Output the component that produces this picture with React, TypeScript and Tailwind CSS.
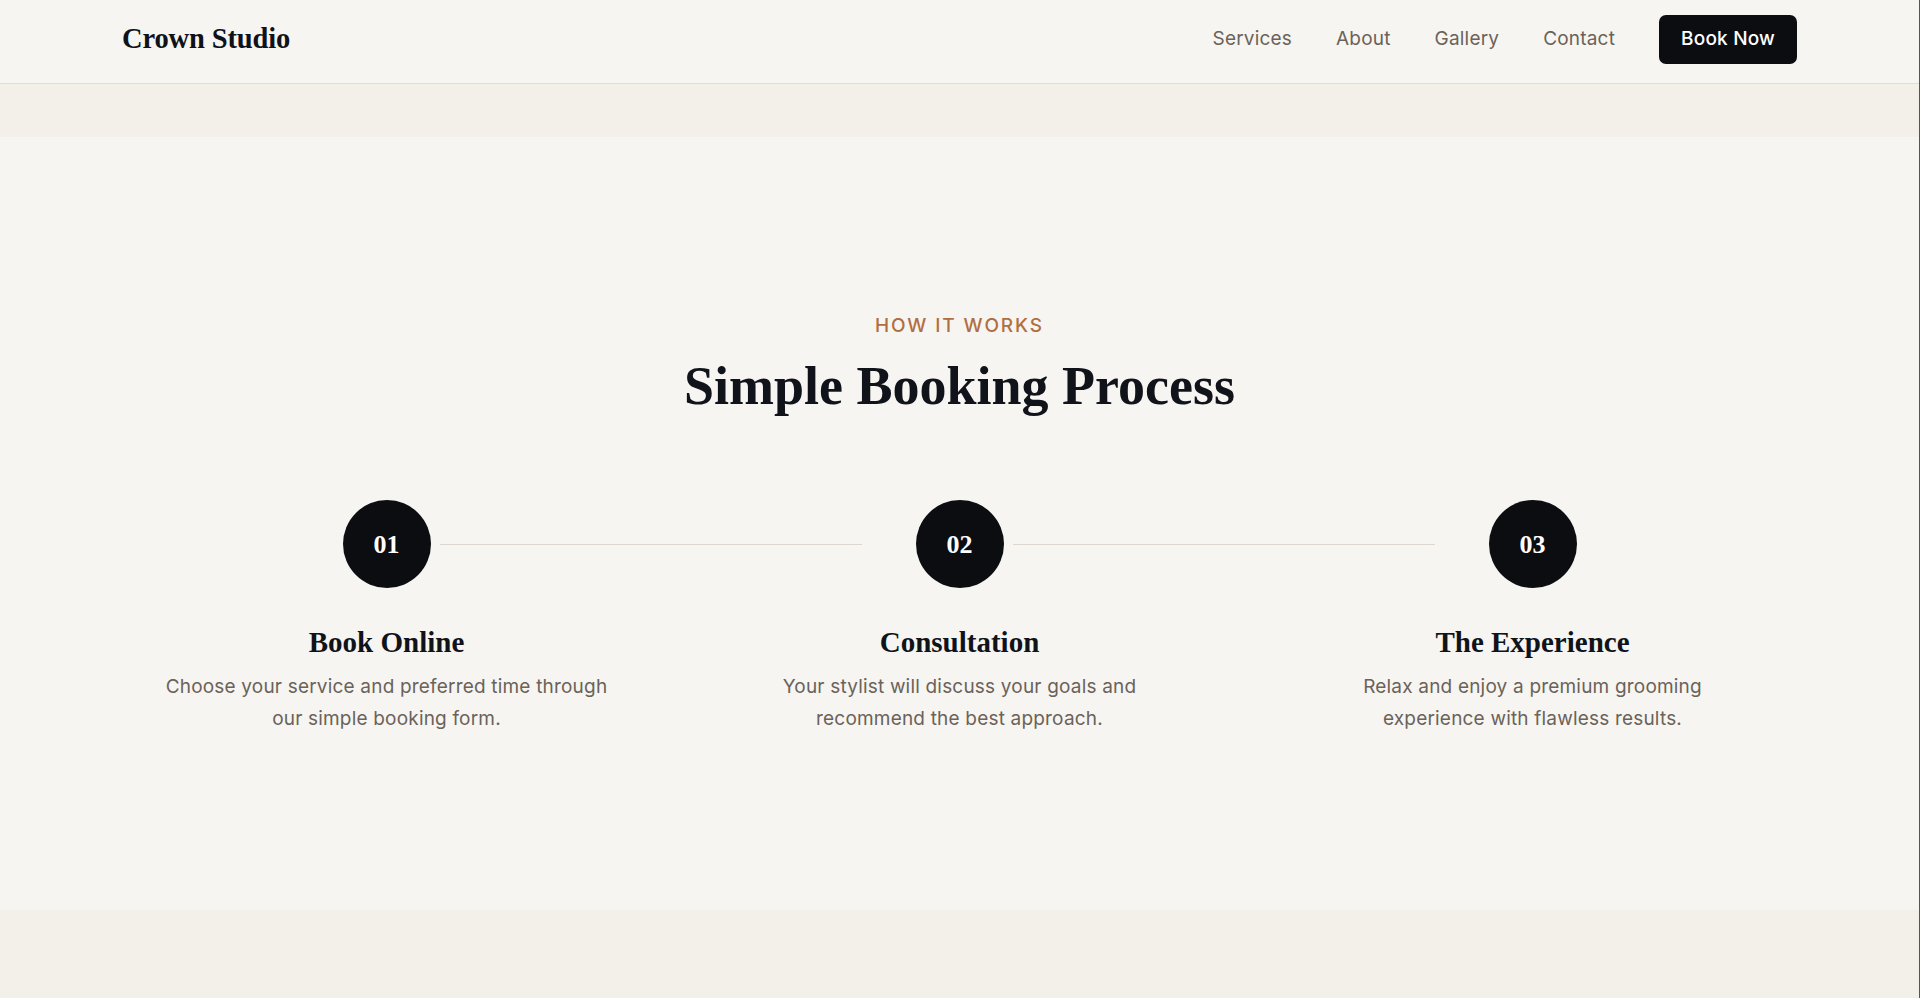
const steps = [
  {
    num: "01",
    title: "Book Online",
    lines: ["Choose your service and preferred time through", "our simple booking form."],
  },
  {
    num: "02",
    title: "Consultation",
    lines: ["Your stylist will discuss your goals and", "recommend the best approach."],
  },
  {
    num: "03",
    title: "The Experience",
    lines: ["Relax and enjoy a premium grooming", "experience with flawless results."],
  },
]

function Header() {
  return (
    <header className="bg-[#f6f5f1] border-b border-[#e2ddd5]">
      <div className="h-[83px] pb-[4px] px-[122px] flex items-center justify-between">
        <a className="font-['Liberation_Serif',serif] font-bold text-[28.5px] tracking-[-0.005em] text-[#0f1218]">
          Crown Studio
        </a>
        <nav className="flex items-center gap-[44px] font-['Inter',sans-serif] text-[19px] tracking-[0.01em]">
          <a className="text-[#6b625a]">Services</a>
          <a className="text-[#6b625a]">About</a>
          <a className="text-[#6b625a]">Gallery</a>
          <a className="text-[#6b625a]">Contact</a>
          <button className="h-[49px] px-[22px] rounded-[7px] bg-[#0c0d10] text-white font-medium">
            Book Now
          </button>
        </nav>
      </div>
    </header>
  )
}

export default function App() {
  return (
    <div className="h-[998px] overflow-hidden flex flex-col bg-[#f3f0e9] border-r border-[#555555]">
      <Header />
      <div className="h-[53px] bg-[#f3f0e9]" />

      {/* How it works */}
      <section className="bg-[#f6f5f1] pt-[175px] pb-[176px]">
        <div className="text-center">
          <p className="font-['Inter',sans-serif] font-medium text-[19px] leading-[28px] tracking-[0.1em] uppercase text-[#b06f42]">
            How it works
          </p>
          <h2 className="mt-[14px] font-['Liberation_Serif',serif] font-bold text-[54px] leading-[65px] text-[#10131a]">
            Simple Booking Process
          </h2>
        </div>

        <div className="mt-[81px] mx-auto w-[1686px] grid grid-cols-3 gap-[33px]">
          {steps.map((step, i) => (
            <div key={step.num} className="relative flex flex-col items-center text-center">
              {i < steps.length - 1 && (
                <div className="absolute top-[44px] left-[calc(50%+53px)] w-[422px] h-px bg-[#ddd6cf]" />
              )}
              <div className="w-[88px] h-[88px] rounded-full bg-[#0c0d10] flex items-center justify-center">
                <span className="font-['Liberation_Serif',serif] font-bold text-[26px] text-white">
                  {step.num}
                </span>
              </div>
              <h3 className="mt-[35px] font-['Liberation_Serif',serif] font-bold text-[29px] leading-[38px] text-[#10131a]">
                {step.title}
              </h3>
              <p className="mt-[10px] font-['Inter',sans-serif] text-[19px] leading-[31.5px] tracking-[0.01em] text-[#6b625a]">
                {step.lines.map((line) => (
                  <span key={line} className="block whitespace-nowrap">
                    {line}
                  </span>
                ))}
              </p>
            </div>
          ))}
        </div>
      </section>

      <div className="flex-1 bg-[#f3f0e9]" />
    </div>
  )
}
